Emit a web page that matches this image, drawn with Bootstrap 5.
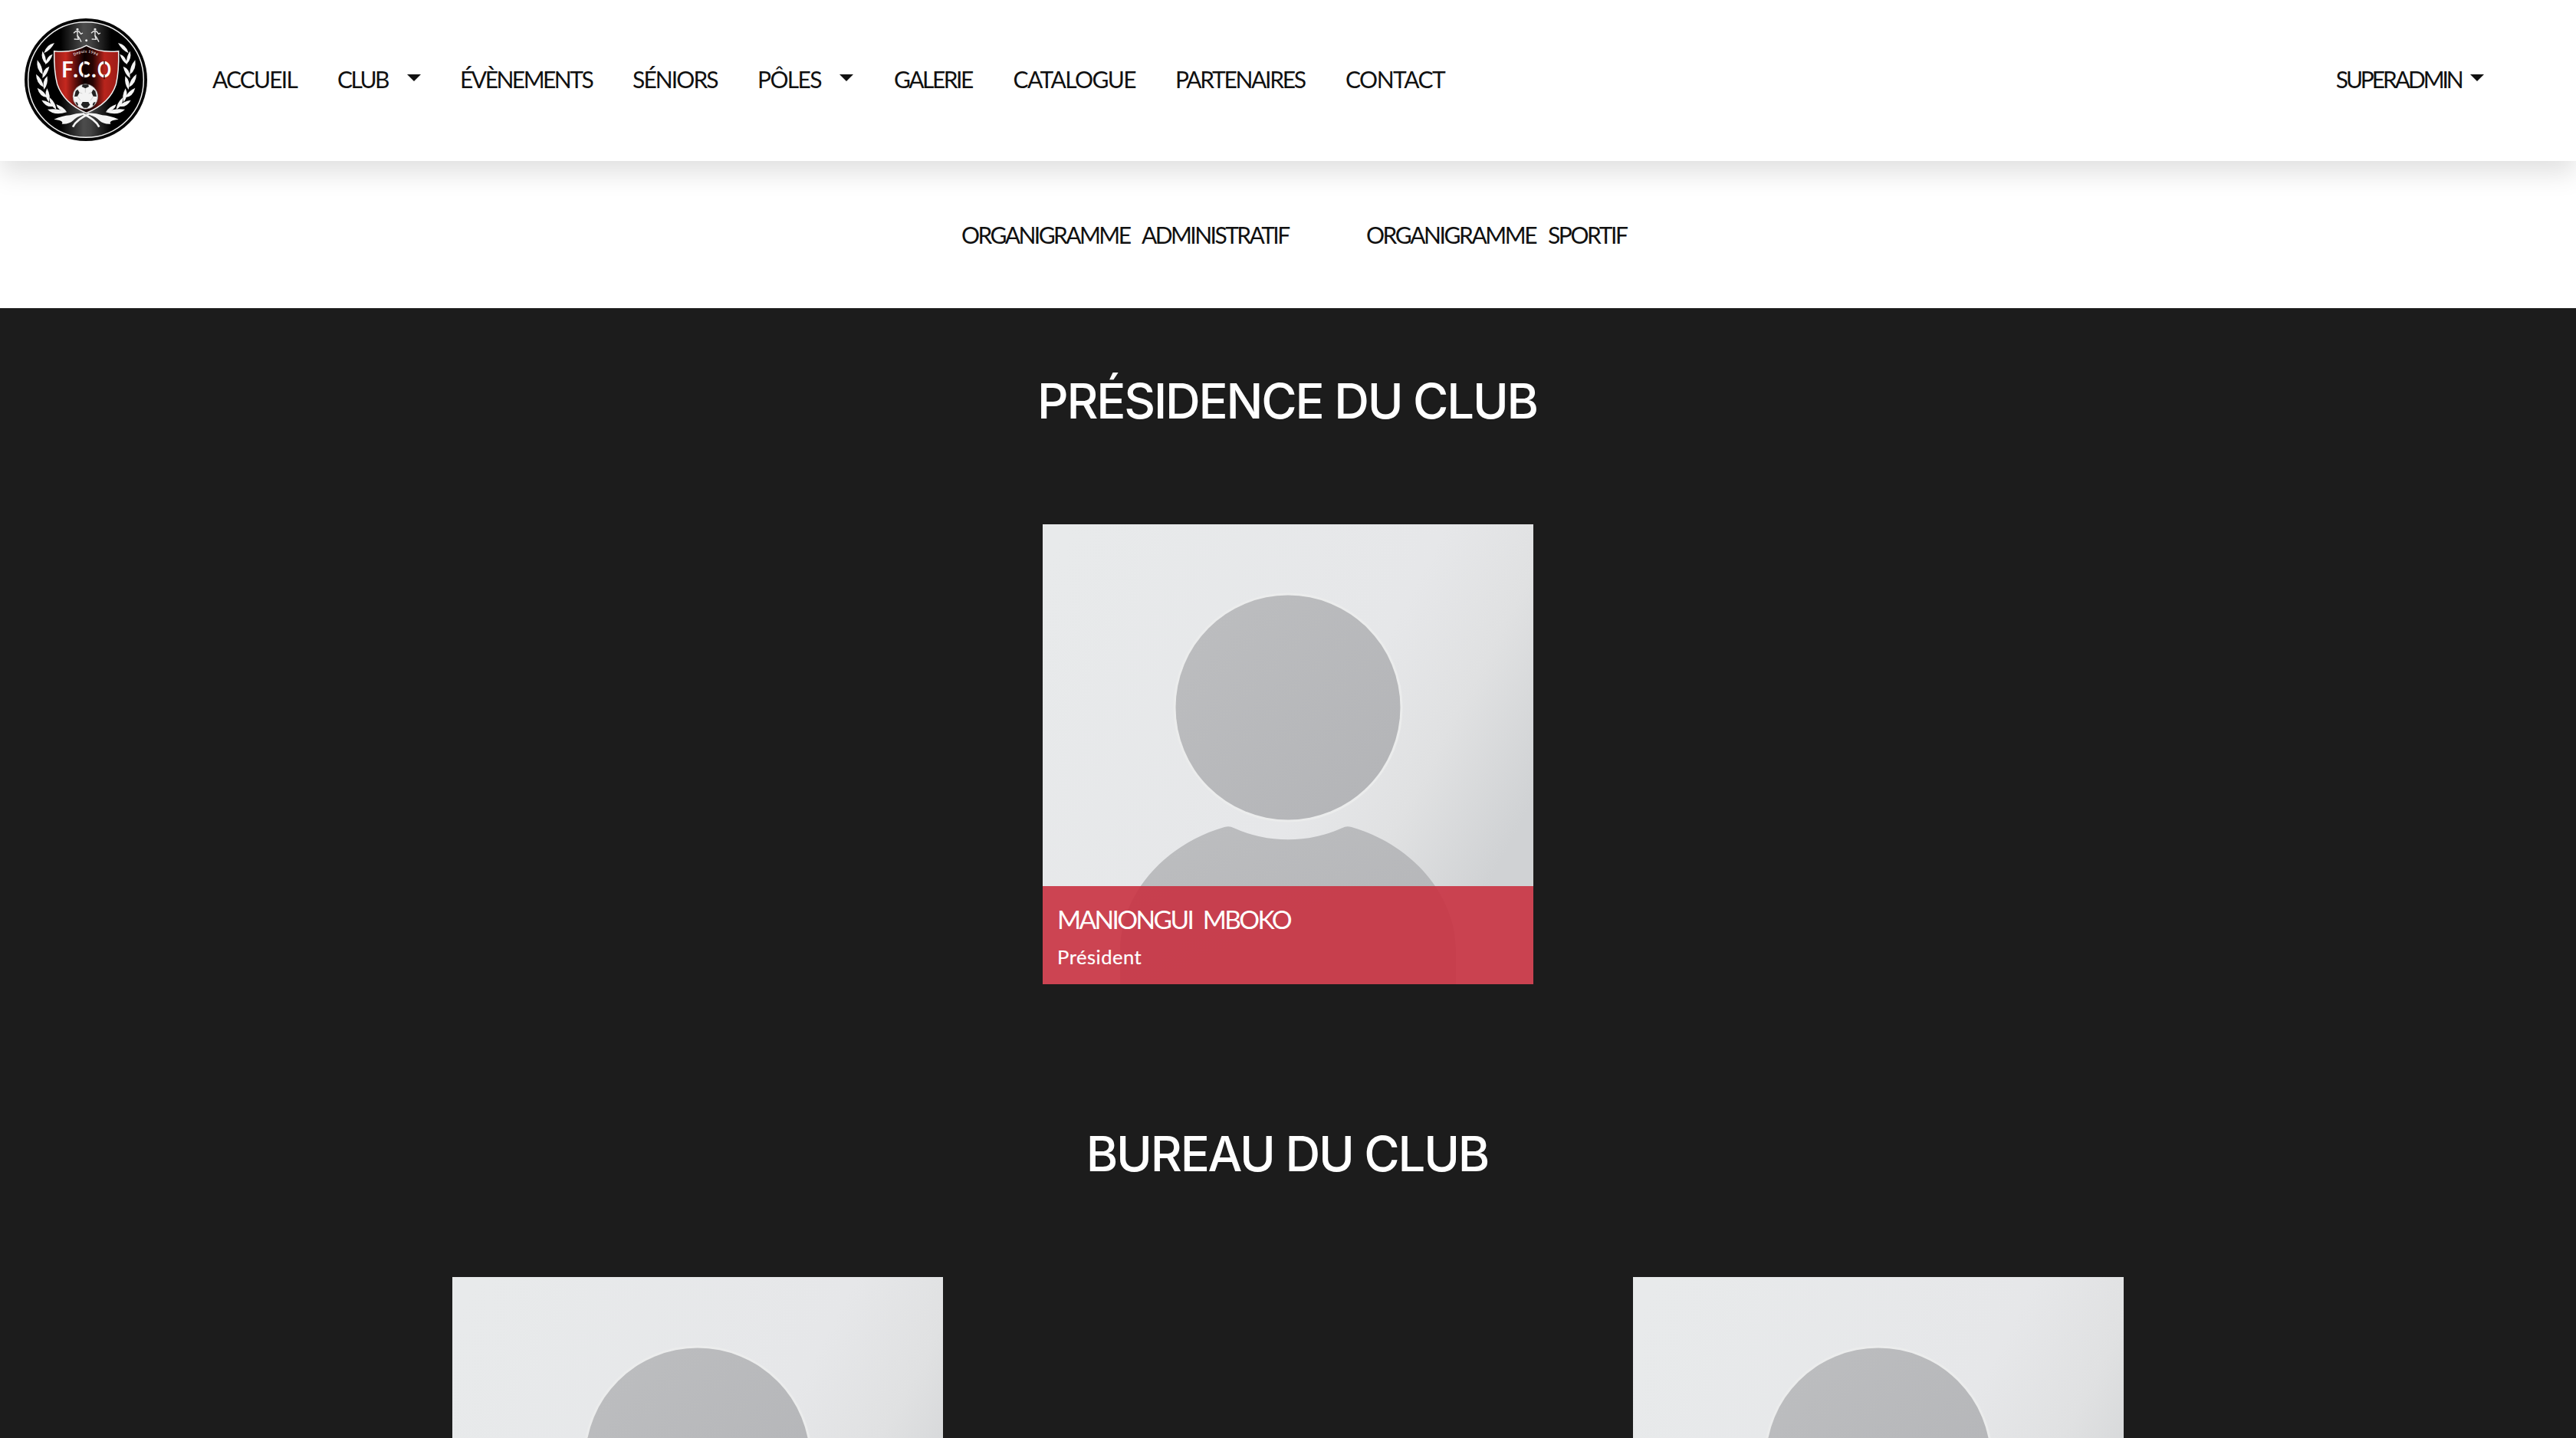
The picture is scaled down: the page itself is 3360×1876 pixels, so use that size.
<!DOCTYPE html>
<html lang="fr">
<head>
<meta charset="utf-8">
<title>Organigramme administratif</title>
<link href="https://cdn.jsdelivr.net/npm/bootstrap@5.3.0/dist/css/bootstrap.min.css" rel="stylesheet">
<style>
body{font-family:Lato,"Noto Sans",sans-serif;font-size:30px;color:#111;height:1876px;overflow:hidden;background:#fff}
.site-nav{height:210px;padding:0 120px 0 32px;box-shadow:0 16px 32px rgba(0,0,0,.12);z-index:2;background:#fff}
.crest{width:160px;height:160px;margin:-2px 85px 0 0}
.crest svg{overflow:visible}
.site-nav .nav-link{padding:0;line-height:36px;color:#111;white-space:nowrap;font-size:30px;letter-spacing:-2.3px}
.main-links{padding-bottom:5px}
.site-nav .dropdown-toggle::after{border-width:9.6px 9.6px 0;margin-left:25px;vertical-align:9px}
.main-links .nav-item:nth-child(1){width:163px}
.main-links .nav-item:nth-child(2){width:160px}
.main-links .nav-item:nth-child(3){width:225px}
.main-links .nav-item:nth-child(4){width:163px}
.main-links .nav-item:nth-child(5){width:178px}
.main-links .nav-item:nth-child(6){width:155.5px}
.main-links .nav-item:nth-child(7){width:211.5px}
.main-links .nav-item:nth-child(8){width:222px}
.main-links .nav-item:nth-child(1) a{letter-spacing:-1.8px}
.main-links .nav-item:nth-child(2) a{letter-spacing:-2.6px}
.main-links .nav-item:nth-child(3) a{letter-spacing:-2.5px}
.main-links .nav-item:nth-child(4) a{letter-spacing:-1.9px}
.main-links .nav-item:nth-child(5) a{letter-spacing:-1.62px}
.main-links .nav-item:nth-child(5) a::after{margin-left:24px}
.main-links .nav-item:nth-child(6) a{letter-spacing:-2.5px}
.main-links .nav-item:nth-child(7) a{letter-spacing:-1.6px}
.main-links .nav-item:nth-child(8) a{letter-spacing:-2.3px}
.main-links .nav-item:nth-child(9) a{letter-spacing:-1.5px}
.site-nav .account-link{letter-spacing:-3.1px;padding-bottom:5px}
.site-nav .account-link::after{margin-left:11.5px}
.sub-nav{height:192px;padding:78px 0 0 1254px}
.sub-nav a{line-height:36px;color:#111;letter-spacing:-2.55px;word-spacing:11.5px;width:528px;white-space:nowrap}
.sub-nav a+a{letter-spacing:-2.4px;word-spacing:10.5px}
.board{background:#1c1c1c;height:1474px;padding-top:83px;overflow:hidden}
.board h2{font:500 63.3px/76px Inter,sans-serif;letter-spacing:-2.18px;color:#fff;margin:0 0 123px;padding-right:2px}
.board section+section{margin-top:183px}
.member{width:640px;height:600px}
.member svg{display:block;width:640px;height:600px}
.member figcaption{height:128px;padding:23px 18px 0;background:rgba(201,50,65,.9);color:#fff}
.member-name{font-size:33.5px;line-height:40px;letter-spacing:-2.6px;word-spacing:7.5px;margin-bottom:13px;padding-left:1px}
.member-role{font-size:25.6px;line-height:32px;letter-spacing:.5px;-webkit-text-stroke:.2px #fff;padding-left:1px}
.pair{gap:900px}
</style>
</head>
<body>
<svg width="0" height="0" class="position-absolute" aria-hidden="true">
  <defs>
    <linearGradient id="wall" x1="0" y1=".1" x2="1" y2=".6"><stop offset="0" stop-color="#e8eaeb"/><stop offset=".62" stop-color="#e6e7e9"/><stop offset=".8" stop-color="#e0e1e2"/><stop offset="1" stop-color="#d0d2d4"/></linearGradient>
    <linearGradient id="skin" x1="0" y1="0" x2="1" y2="1"><stop offset="0" stop-color="#bdbec0"/><stop offset="1" stop-color="#b3b4b7"/></linearGradient>
    <symbol id="avatar" viewBox="0 0 640 600">
      <rect width="640" height="600" fill="url(#wall)"/>
      <circle cx="320" cy="239" r="147.500" fill="none" stroke="#ebecec" stroke-width="4"/>
      <circle cx="320" cy="239" r="146.500" fill="url(#skin)"/>
      <path d="M101 600V556C101 482 160 417 237 395Q244 393 249 396A172.500 172.500 0 0 0 391 396Q396 393 403 395C480 417 539 482 539 556V600Z" fill="url(#skin)"/>
    </symbol>
  </defs>
</svg>

<nav class="site-nav navbar position-relative d-flex flex-nowrap align-items-center">
  <a class="crest flex-shrink-0 d-block" href="#" aria-label="F.C.O">
    <svg class="d-block" width="160" height="160" viewBox="36 42 480 480">
      <defs>
        <linearGradient id="disc"><stop offset=".28" stop-color="#000"/><stop offset=".48" stop-color="#4c4c4c"/><stop offset=".54" stop-color="#444"/><stop offset=".72" stop-color="#000"/></linearGradient>
        <linearGradient id="shield"><stop offset="0" stop-color="#8e1915"/><stop offset=".18" stop-color="#c5281f"/><stop offset=".34" stop-color="#5a0d0b"/><stop offset=".47" stop-color="#0c0000"/><stop offset=".6" stop-color="#2a0504"/><stop offset=".78" stop-color="#b8241c"/><stop offset="1" stop-color="#9c1c17"/></linearGradient>
        <g id="laurel" fill="#f4f4f4">
          <path d="M153 138Q120 145 112 178Q140 165 153 138Z"/>
          <path d="M106 170Q98 200 120 221Q122 190 106 170Z"/>
          <path d="M146 182Q121 190 117 222Q138 210 146 182Z"/>
          <path d="M86 205Q80 243 107 262Q108 230 86 205Z"/>
          <path d="M133 230Q105 240 106 276Q126 262 133 230Z"/>
          <path d="M81 260Q82 297 110 311Q108 280 81 260Z"/>
          <path d="M125 268Q103 287 112 321Q129 302 125 268Z"/>
          <path d="M86 314Q95 349 125 352Q114 326 86 314Z"/>
          <path d="M124 316Q110 343 131 370Q140 345 124 316Z"/>
          <path d="M103 362Q120 393 151 386Q134 366 103 362Z"/>
          <path d="M134 351Q131 380 160 399Q158 372 134 351Z"/>
          <path d="M126 398Q152 425 201 409Q166 392 126 398Z"/>
          <path d="M160 378Q165 403 201 409Q190 388 160 378Z"/>
          <path d="M151 437Q183 423 214 421Q244 411 270 413L262 421Q240 427 226 442Q210 457 182 455Q192 441 151 437Z"/>
        </g>
        <g id="runner" fill="none" stroke="#e8e8e8" stroke-width="4"><circle cx="243" cy="85" r="3" fill="#e8e8e8"/><path d="M243 92V108L251 120L258 134M242 108L247 124L230 123M228 100L236 93H249L257 103L264 99"/></g>
      </defs>
      <circle cx="276" cy="282" r="240" fill="#050505"/>
      <circle cx="276" cy="282" r="226" fill="url(#disc)" stroke="#f2f2f2" stroke-width="4.500"/>
      <use href="#laurel"/>
      <use href="#laurel" transform="matrix(-1 0 0 1 555 0)"/>
      <path d="M225 467Q240 437 290 415M328 467Q313 437 263 415" stroke="#f4f4f4" stroke-width="8" fill="none"/>
      <path d="M152 170Q225 178 278 148Q330 178 404 170Q406 250 394 300Q370 375 278 412Q190 375 164 300Q151 250 152 170Z" fill="url(#shield)" stroke="#f0f0f0" stroke-width="4.500"/>
      <use href="#runner"/>
      <use href="#runner" transform="translate(69)"/>
      <circle cx="278" cy="128" r="4.500" fill="#f4f4f4"/>
      <path id="since" d="M230 189Q276 162 322 191" fill="none"/>
      <text font-family="Lato,sans-serif" font-weight="700" font-size="15" letter-spacing="1" fill="#e6dcdc"><textPath href="#since">Depuis 1994</textPath></text>
      <g font-family="Lato,sans-serif" font-weight="700" fill="#fff" font-size="86">
        <text x="181" y="274" textLength="46" lengthAdjust="spacingAndGlyphs">F</text>
        <text x="226" y="274">.</text>
        <text x="246" y="274" textLength="47" lengthAdjust="spacingAndGlyphs">C</text>
        <text x="297" y="274">.</text>
        <text x="321" y="274" textLength="54" lengthAdjust="spacingAndGlyphs">O</text>
      </g>
      <path d="M268 210v18M268 260v18M348 208v14M348 264v16" stroke="#300807" stroke-width="4"/>
      <circle cx="274" cy="348" r="49" fill="#f3f3f3" stroke="#888" stroke-width="2"/>
      <path d="M264 301H285L288 309L274 316L260 309ZM236 326L244 320L251 332L243 347L231 348ZM313 326L305 320L298 332L305 347L318 348ZM263 369H286L292 380L281 392H268L257 380ZM235 368L243 372L246 382L241 383ZM314 368L305 372L302 382L307 383Z" fill="#222"/>
      <path d="M274 316V332M251 332L262 336M298 332L287 336M243 347L255 364M305 347L294 364" stroke="#bbb" stroke-width="2" fill="none"/>
    </svg>
  </a>
  <ul class="main-links nav flex-nowrap">
    <li class="nav-item"><a class="nav-link" href="#">ACCUEIL</a></li>
    <li class="nav-item dropdown"><a class="nav-link dropdown-toggle" href="#" data-bs-toggle="dropdown">CLUB</a></li>
    <li class="nav-item"><a class="nav-link" href="#">ÉVÈNEMENTS</a></li>
    <li class="nav-item"><a class="nav-link" href="#">SÉNIORS</a></li>
    <li class="nav-item dropdown"><a class="nav-link dropdown-toggle" href="#" data-bs-toggle="dropdown">PÔLES</a></li>
    <li class="nav-item"><a class="nav-link" href="#">GALERIE</a></li>
    <li class="nav-item"><a class="nav-link" href="#">CATALOGUE</a></li>
    <li class="nav-item"><a class="nav-link" href="#">PARTENAIRES</a></li>
    <li class="nav-item"><a class="nav-link" href="#">CONTACT</a></li>
  </ul>
  <a class="account-link nav-link dropdown-toggle ms-auto" href="#" data-bs-toggle="dropdown">SUPERADMIN</a>
</nav>

<div class="sub-nav d-flex align-items-start">
  <a class="text-decoration-none" href="#">ORGANIGRAMME ADMINISTRATIF</a>
  <a class="text-decoration-none" href="#">ORGANIGRAMME SPORTIF</a>
</div>

<main class="board">
  <section>
    <h2 class="text-center">PRÉSIDENCE DU CLUB</h2>
    <div class="d-flex justify-content-center">
      <figure class="member position-relative m-0">
        <svg role="img" aria-label="Portrait"><use href="#avatar"/></svg>
        <figcaption class="position-absolute bottom-0 start-0 w-100">
          <div class="member-name">MANIONGUI MBOKO</div>
          <div class="member-role">Président</div>
        </figcaption>
      </figure>
    </div>
  </section>
  <section>
    <h2 class="text-center">BUREAU DU CLUB</h2>
    <div class="pair d-flex justify-content-center">
      <figure class="member m-0"><svg role="img" aria-label="Portrait"><use href="#avatar"/></svg></figure>
      <figure class="member m-0"><svg role="img" aria-label="Portrait"><use href="#avatar"/></svg></figure>
    </div>
  </section>
</main>
<script src="https://cdn.jsdelivr.net/npm/bootstrap@5.3.0/dist/js/bootstrap.bundle.min.js"></script>
</body>
</html>
